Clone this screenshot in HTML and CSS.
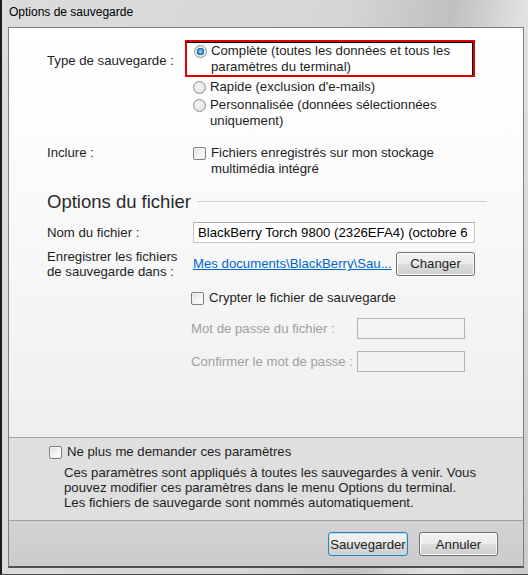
FILE: index.html
```html
<!DOCTYPE html>
<html lang="fr">

<head>
    <meta charset="UTF-8">
    <link rel="stylesheet" href="styles.css">
</head>

<body>
    <div class="window">
        <div class="titlebar">Options de sauvegarde</div>
        <div class="client">
            <div class="main">
                <!-- type de sauvegarde -->
                <div class="row type-row">
                    <div class="label type-label">Type de sauvegarde :</div>
                    <div class="control">
                        <div class="highlight">
                            <div class="option">
                                <span class="radio checked"></span>
                                <span>Complète (toutes les données et tous les<br>paramètres du terminal)</span>
                            </div>
                        </div>
                        <div class="option option-gap">
                            <span class="radio"></span>
                            <span>Rapide (exclusion d'e-mails)</span>
                        </div>
                        <div class="option option-gap">
                            <span class="radio"></span>
                            <span>Personnalisée (données sélectionnées<br>uniquement)</span>
                        </div>
                    </div>
                </div>

                <div class="row include-row">
                    <div class="label">Inclure :</div>
                    <div class="control">
                        <div class="option">
                            <span class="check"></span>
                            <span>Fichiers enregistrés sur mon stockage<br>multimédia intégré</span>
                        </div>
                    </div>
                </div>

                <!-- options du fichier -->
                <div class="section-title">
                    <span>Options du fichier</span>
                    <span class="section-line"></span>
                </div>

                <div class="row name-row">
                    <div class="label">Nom du fichier :</div>
                    <div class="control">
                        <input class="field" type="text" value="BlackBerry Torch 9800 (2326EFA4) (octobre 6 2011)">
                    </div>
                </div>

                <div class="row folder-row">
                    <div class="label label-tight">Enregistrer les fichiers<br>de sauvegarde dans :</div>
                    <div class="control folder-control">
                        <a class="link" href="#">Mes documents\BlackBerry\Sau...</a>
                        <button class="btn btn-change">Changer</button>
                    </div>
                </div>

                <div class="crypt">
                    <div class="option">
                        <span class="check"></span>
                        <span>Crypter le fichier de sauvegarde</span>
                    </div>
                    <div class="pwd-row">
                        <div class="pwd-label">Mot de passe du fichier :</div>
                        <input class="field field-small" type="password" disabled>
                    </div>
                    <div class="pwd-row">
                        <div class="pwd-label">Confirmer le mot de passe :</div>
                        <input class="field field-small" type="password" disabled>
                    </div>
                </div>
            </div>

            <div class="notice">
                <div class="option">
                    <span class="check"></span>
                    <span>Ne plus me demander ces paramètres</span>
                </div>
                <p class="notice-text">Ces paramètres sont appliqués à toutes les sauvegardes à venir. Vous<br>pouvez modifier ces paramètres dans le menu Options du terminal.<br>Les fichiers de sauvegarde sont nommés automatiquement.</p>
            </div>

            <div class="actions">
                <button class="btn btn-default">Sauvegarder</button>
                <button class="btn btn-cancel">Annuler</button>
            </div>
        </div>
    </div>
</body>

</html>
```

FILE: styles.css
```css
* {
    box-sizing: border-box;
}

body {
    margin: 0;
    font-family: "Liberation Sans", Arial, sans-serif;
    font-size: 13.2px;
    color: #1e1e1e;
    background-color: #1a1a1a;
}

.window {
    width: 528px;
    height: 575px;
    display: flex;
    flex-direction: column;
    border-left: 2px solid #1c1c1c;
    border-bottom: 1px solid #4a4a4a;
    background: linear-gradient(100deg, #dadcde 0%, #d4d6d8 55%, #c0c0c0 72%, #e2e2e2 84%, #cbcbcb 100%);
}

.titlebar {
    height: 27px;
    padding: 4px 0 0 7px;
    font-size: 12px;
    line-height: 16px;
    color: #000;
}

.client {
    flex: 1;
    margin: 0 4px 6px 6px;
    display: flex;
    flex-direction: column;
    border: 1px solid #7e7e7e;
    border-bottom: 2px solid #505050;
}

.main {
    height: 409px;
    padding: 0 36px 0 38px;
    background: linear-gradient(#ffffff 0%, #fcfcfc 30%, #efefef 100%);
    line-height: 16px;
}

.row {
    display: flex;
}

.label {
    width: 146px;
    flex-shrink: 0;
}

.control {
    width: 282px;
}

.type-row {
    margin-top: 12px;
}

.type-label {
    padding-top: 13px;
}

.highlight {
    margin-left: -8px;
    padding: 1px 0 0 7px;
    height: 37px;
    border: 2px solid #e00000;
    box-shadow: inset -1px 1px 0 #000;
}

.option {
    display: flex;
    gap: 5px;
}

.option-gap {
    margin-top: 2px;
}

.radio {
    width: 13px;
    height: 13px;
    margin-top: 2px;
    flex-shrink: 0;
    border: 1px solid #8d8d8d;
    border-radius: 50%;
    background: radial-gradient(circle at 40% 40%, #f8f8f8 0%, #e2e2e2 70%, #d0d0d0 100%);
}

.radio + span {
    margin-left: -1px;
}

.radio.checked {
    background: radial-gradient(circle at 50% 50%, #9fdcff 0%, #2f8bd6 2.5px, #1b5e9e 3.5px, #e8e8e8 4px, #f4f4f4 100%);
}

.check {
    width: 13px;
    height: 13px;
    margin-top: 2px;
    flex-shrink: 0;
    border: 1px solid #808080;
    border-radius: 2px;
    background: linear-gradient(135deg, #dcdcdc 0%, #f6f6f6 60%, #ffffff 100%);
    box-shadow: inset 0 0 0 1px #f4f4f4;
}

.include-row {
    margin-top: 16px;
}

.section-title {
    margin-top: 13px;
    display: flex;
    align-items: center;
    font-size: 18.5px;
    line-height: 24px;
    color: #2a2a2a;
}

.section-line {
    flex: 1;
    margin-left: 6px;
    height: 2px;
    border-top: 1px solid #cdcdcd;
    border-bottom: 1px solid #ffffff;
}

.name-row {
    margin-top: 8px;
    align-items: center;
}

.field {
    display: block;
    width: 282px;
    height: 21px;
    padding: 0 4px;
    margin: 0;
    border: 1px solid #c5c5c5;
    border-top-color: #abadb3;
    background: #ffffff;
    font: inherit;
    color: #000;
    outline: none;
}

.folder-row {
    margin-top: 6px;
    align-items: center;
}

.label-tight {
    line-height: 15px;
}

.folder-control {
    display: flex;
    justify-content: space-between;
    align-items: center;
}

.link {
    color: #0066cc;
    text-decoration: underline;
}

.btn {
    height: 24px;
    padding: 0;
    border: 1px solid #707070;
    border-radius: 3px;
    background: linear-gradient(#f2f2f2 0%, #ebebeb 50%, #dddddd 50%, #cfcfcf 100%);
    box-shadow: inset 0 0 0 1px #fcfcfc;
    font: inherit;
    color: #1e1e1e;
}

.btn-change {
    width: 79px;
}

.crypt {
    margin: 11px 0 0 144px;
}

.pwd-row {
    margin-top: 12px;
    display: flex;
    align-items: center;
    color: #a0a0a0;
}

.pwd-label {
    width: 166px;
}

.field-small {
    width: 108px;
    border-color: #b4b4b4;
    background: transparent;
}

.notice {
    height: 83px;
    padding: 6px 0 0 40px;
    border-top: 1px solid #a3a3a3;
    background: #dfdfdf;
    line-height: 16px;
}

.notice-text {
    margin: 5px 0 0 15px;
    line-height: 15px;
}

.actions {
    flex: 1;
    display: flex;
    justify-content: flex-end;
    gap: 11px;
    padding: 11px 25px 0 0;
    border-top: 1px solid #a0a0a0;
    background: linear-gradient(#d3d3d3, #cbcbcb);
}

.btn-default {
    width: 80px;
    border-color: #3c7fb1;
    box-shadow: inset 0 0 0 1px #a6e0fb;
}

.btn-cancel {
    width: 79px;
}
```
